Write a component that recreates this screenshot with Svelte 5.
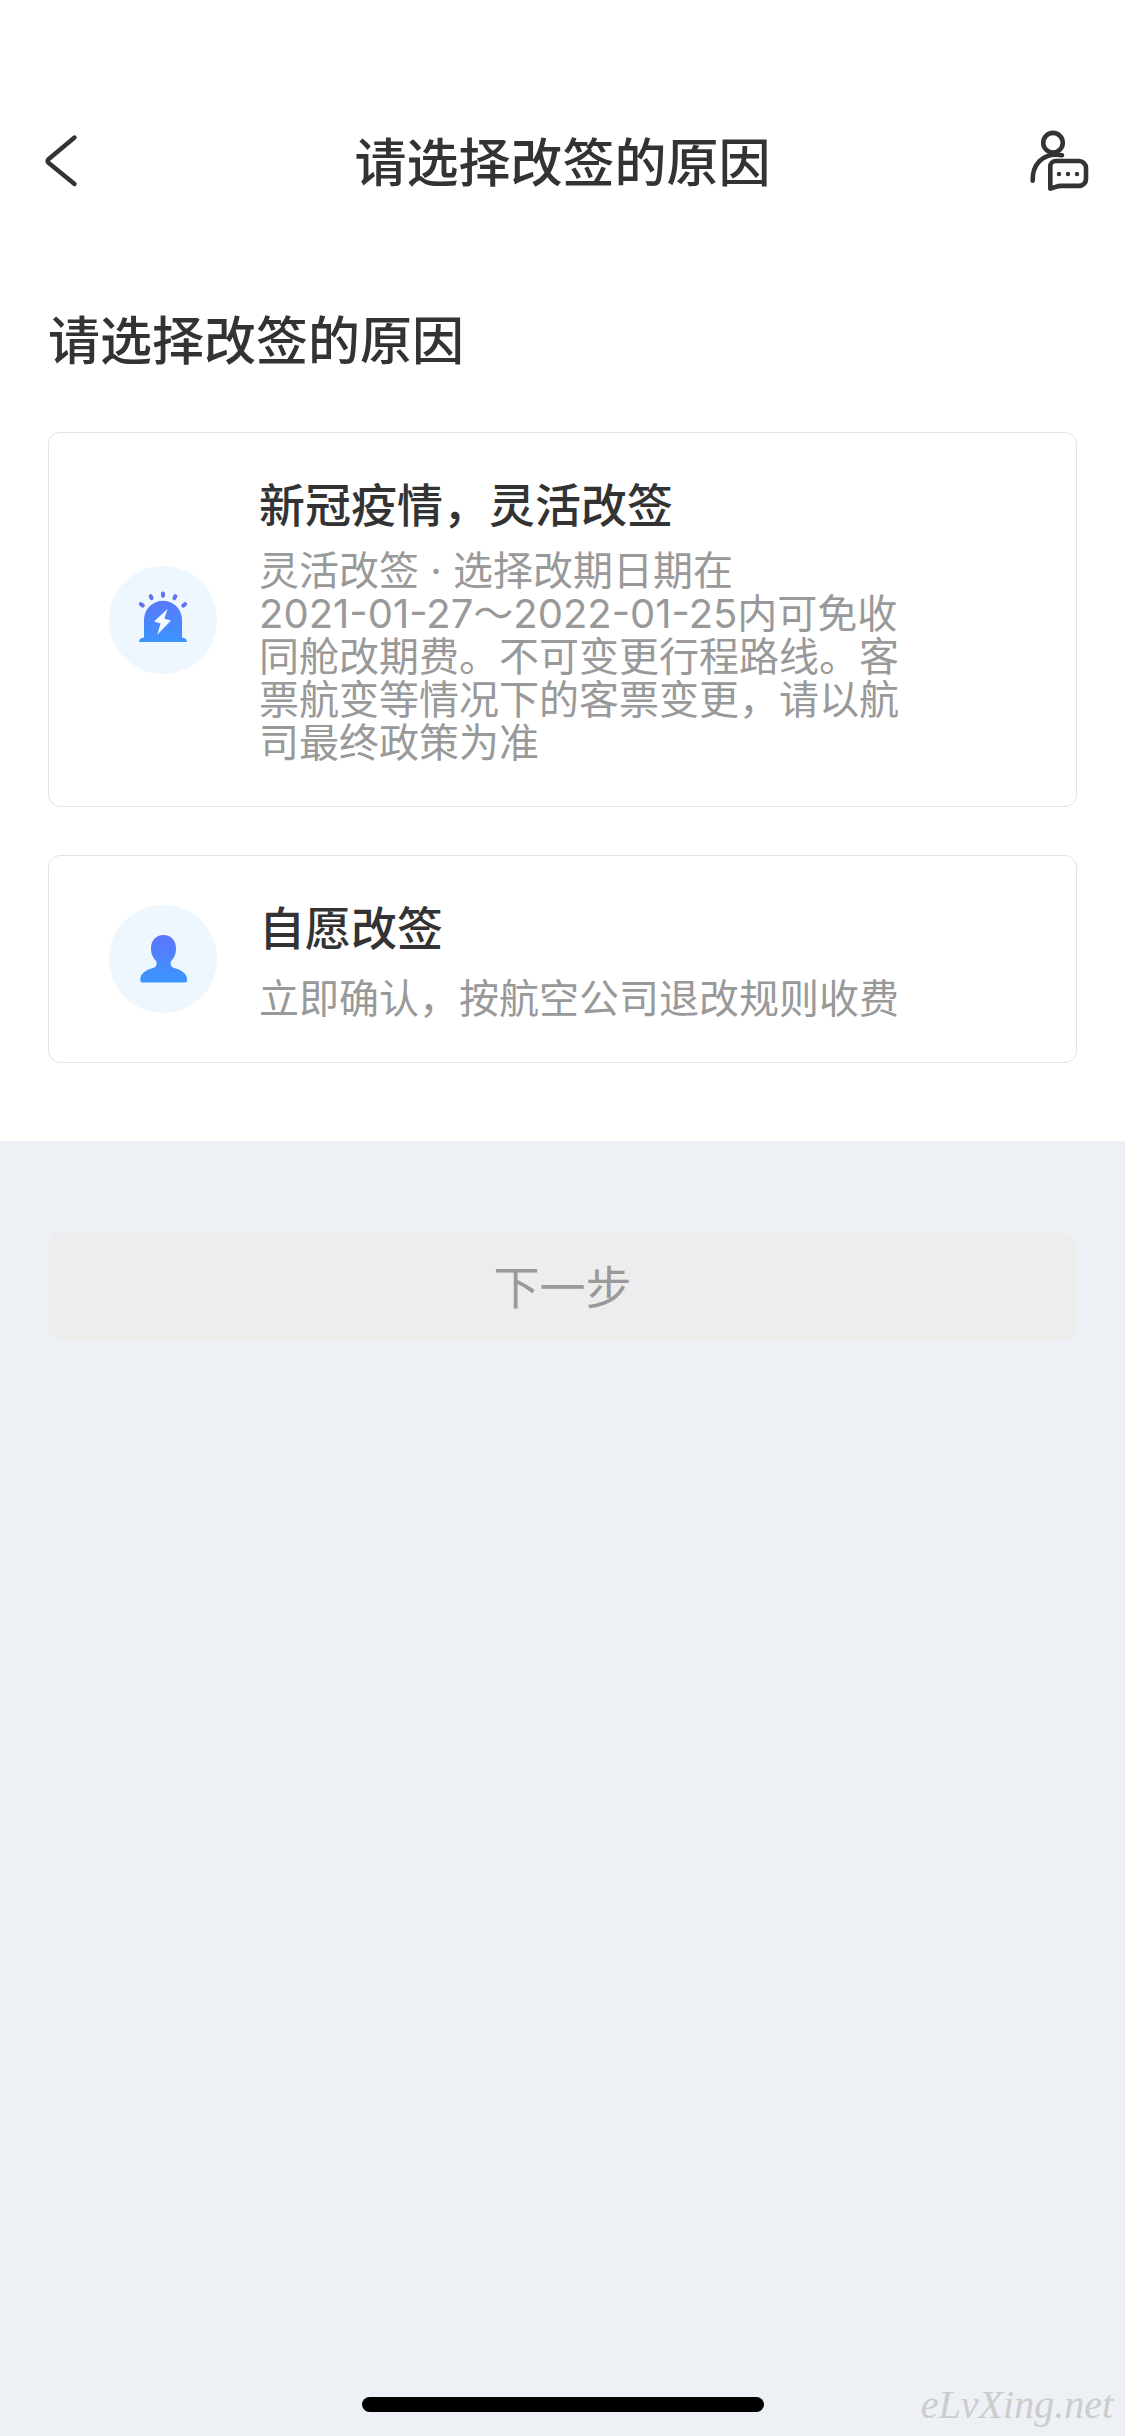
<script lang="ts">
  type Reason = {
    id: 'epidemic' | 'voluntary';
    title: string;
    desc: string;
  };

  const reasons: Reason[] = [
    {
      id: 'epidemic',
      title: '新冠疫情，灵活改签',
      desc: '灵活改签 · 选择改期日期在\n2021-01-27～2022-01-25内可免收同舱改期费。不可变更行程路线。客票航变等情况下的客票变更，请以航司最终政策为准',
    },
    {
      id: 'voluntary',
      title: '自愿改签',
      desc: '立即确认，按航空公司退改规则收费',
    },
  ];

  let selected = $state<Reason['id'] | null>(null);
</script>

<div class="page">
  <header class="header">
    <button class="header__btn" type="button" aria-label="返回">
      <svg width="36" height="60" viewBox="0 0 36 60" fill="none" stroke="#333" stroke-width="4.4" stroke-linecap="round" stroke-linejoin="round" aria-hidden="true">
        <path d="M30.5 7.5 4.5 29.2Q2.6 31 4.5 32.8L30.5 54" />
      </svg>
    </button>
    <h1 class="header__title">请选择改签的原因</h1>
    <button class="header__btn header__btn--end" type="button" aria-label="客服">
      <svg width="60" height="62" viewBox="0 0 60 62" fill="none" stroke="#333" stroke-width="4.6" stroke-linecap="round" stroke-linejoin="round" aria-hidden="true">
        <circle cx="24" cy="13.7" r="9.8" />
        <path d="M3.7 51.7C3.2 36.5 12.5 23 33 26.2" />
        <path d="M21.3 59.6V37.5a5.5 5.5 0 0 1 5.5-5.5H50a7 7 0 0 1 7 7v10.9a7 7 0 0 1-7 7H32C28 56.9 26 58.6 21.3 59.6z" />
        <g fill="#333" stroke="none">
          <circle cx="30" cy="45" r="2.2" />
          <circle cx="39" cy="45" r="2.2" />
          <circle cx="48" cy="45" r="2.2" />
        </g>
      </svg>
    </button>
  </header>

  <main class="content">
    <section class="reasons">
      <h2 class="reasons__title">请选择改签的原因</h2>
      <div class="reasons__list">
        {#each reasons as reason (reason.id)}
          <button
            class="card"
            type="button"
            aria-pressed={selected === reason.id}
            onclick={() => (selected = reason.id)}
          >
            <svg class="card__icon" width="108" height="108" viewBox="0 0 108 108" aria-hidden="true">
              <defs>
                <linearGradient id="grad-{reason.id}" gradientUnits="userSpaceOnUse" x1="0" y1="26" x2="0" y2="76">
                  <stop offset="0" stop-color="#6172fb" />
                  <stop offset="1" stop-color="#3b95ff" />
                </linearGradient>
              </defs>
              <circle cx="54" cy="54" r="54" fill="#eff7fe" />
              {#if reason.id === 'epidemic'}
                <path
                  fill="url(#grad-{reason.id})"
                  d="M35 71.5V53.7a19 19 0 0 1 38 0V71.5Q78 72 78 76H30Q30 72 35 71.5z"
                />
                <path fill="#f4f9ff" d="M58.5 43 45 55.6 51.5 57.5 48.3 68.7 62 54.6 55.4 52.7z" />
                <path
                  stroke="#6172f3"
                  stroke-width="4"
                  stroke-linecap="round"
                  d="M54 27.4v2.4M41.6 30.2l1 2M66.4 30.2l-1 2M31.8 38l2 1.6M76.2 38l-2 1.6"
                />
              {:else}
                <path
                  fill="url(#grad-{reason.id})"
                  d="M54.5 30C62 30 67 35.5 67 43.5C67 49.5 64.8 53.5 62 56.2C61 59.8 62 62 66 63.2C73 65.3 78 69 78 74V75.5Q78 77.5 76 77.5H33.3Q31.3 77.5 31.3 75.5V74C31.3 69 36.3 65.3 43.3 63.2C47.3 62 48.3 59.8 47.3 56.2C44.5 53.5 42 49.5 42 43.5C42 35.5 47 30 54.5 30z"
                />
              {/if}
            </svg>
            <span class="card__body">
              <span class="card__title">{reason.title}</span>
              <span class="card__desc">{reason.desc}</span>
            </span>
          </button>
        {/each}
      </div>
    </section>

    <div class="actions">
      <button class="next" type="button" disabled={!selected}>下一步</button>
    </div>
  </main>

  <footer class="footer">
    <span class="footer__bar"></span>
    <span class="footer__mark">eLvXing.net</span>
  </footer>
</div>

<style>
  :global(body) {
    background: #edf0f5;
  }

  .page {
    display: flex;
    flex-direction: column;
    min-height: 100vh;
    font-family: Inter, "Noto Sans CJK SC", sans-serif;
    color: #333;
  }

  button {
    font-family: inherit;
    color: inherit;
    border: none;
    padding: 0;
    cursor: pointer;
  }

  svg {
    display: block;
  }

  /* Header */
  .header {
    display: grid;
    grid-template-columns: 1fr auto 1fr;
    align-items: center;
    height: 132px;
    padding: 94px 36px 0;
    background: #fff;
  }

  .header__btn {
    justify-self: start;
    padding: 0 0 0 8px;
    background: none;
  }

  .header__btn--end {
    justify-self: end;
  }

  .header__title,
  .reasons__title {
    margin: 0;
    font-size: 52px;
    line-height: 72px;
    font-weight: 500;
  }

  .header__title {
    padding-top: 8px;
  }

  /* Reasons */
  .content {
    flex: 1;
  }

  .reasons {
    padding: 80px 48px 78px;
    background: #fff;
  }

  .reasons__list {
    display: flex;
    flex-direction: column;
    gap: 48px;
    margin-top: 54px;
  }

  .card {
    display: flex;
    align-items: center;
    gap: 42px;
    padding: 42px 60px;
    border: 1px solid #dfe2e6;
    border-radius: 12px;
    background: #fff;
    text-align: left;
  }

  .card__icon {
    flex-shrink: 0;
  }

  .card__body {
    display: flex;
    flex-direction: column;
    gap: 14px;
    max-width: 648px;
  }

  .card__title {
    font-size: 46px;
    line-height: 60px;
    font-weight: 500;
  }

  .card__desc {
    min-height: 48px;
    align-content: end;
    font-size: 40px;
    line-height: 43px;
    white-space: pre-line;
    color: #999;
  }

  /* Next step */
  .actions {
    padding: 92px 48px;
  }

  .next {
    display: block;
    width: 100%;
    height: 108px;
    padding-bottom: 6px;
    border-radius: 14px;
    background: #ededed;
    font-size: 46px;
    color: #999;
  }

  /* Bottom strip */
  .footer {
    display: grid;
    grid-template-columns: 1fr 402px 1fr;
    align-items: center;
    height: 63px;
  }

  .footer__bar {
    grid-column: 2;
    height: 15px;
    border-radius: 8px;
    background: #000;
  }

  .footer__mark {
    justify-self: end;
    padding-right: 12px;
    font-family: "Liberation Serif", serif;
    font-size: 40px;
    line-height: 48px;
    font-style: italic;
    color: #ccc;
  }
</style>
